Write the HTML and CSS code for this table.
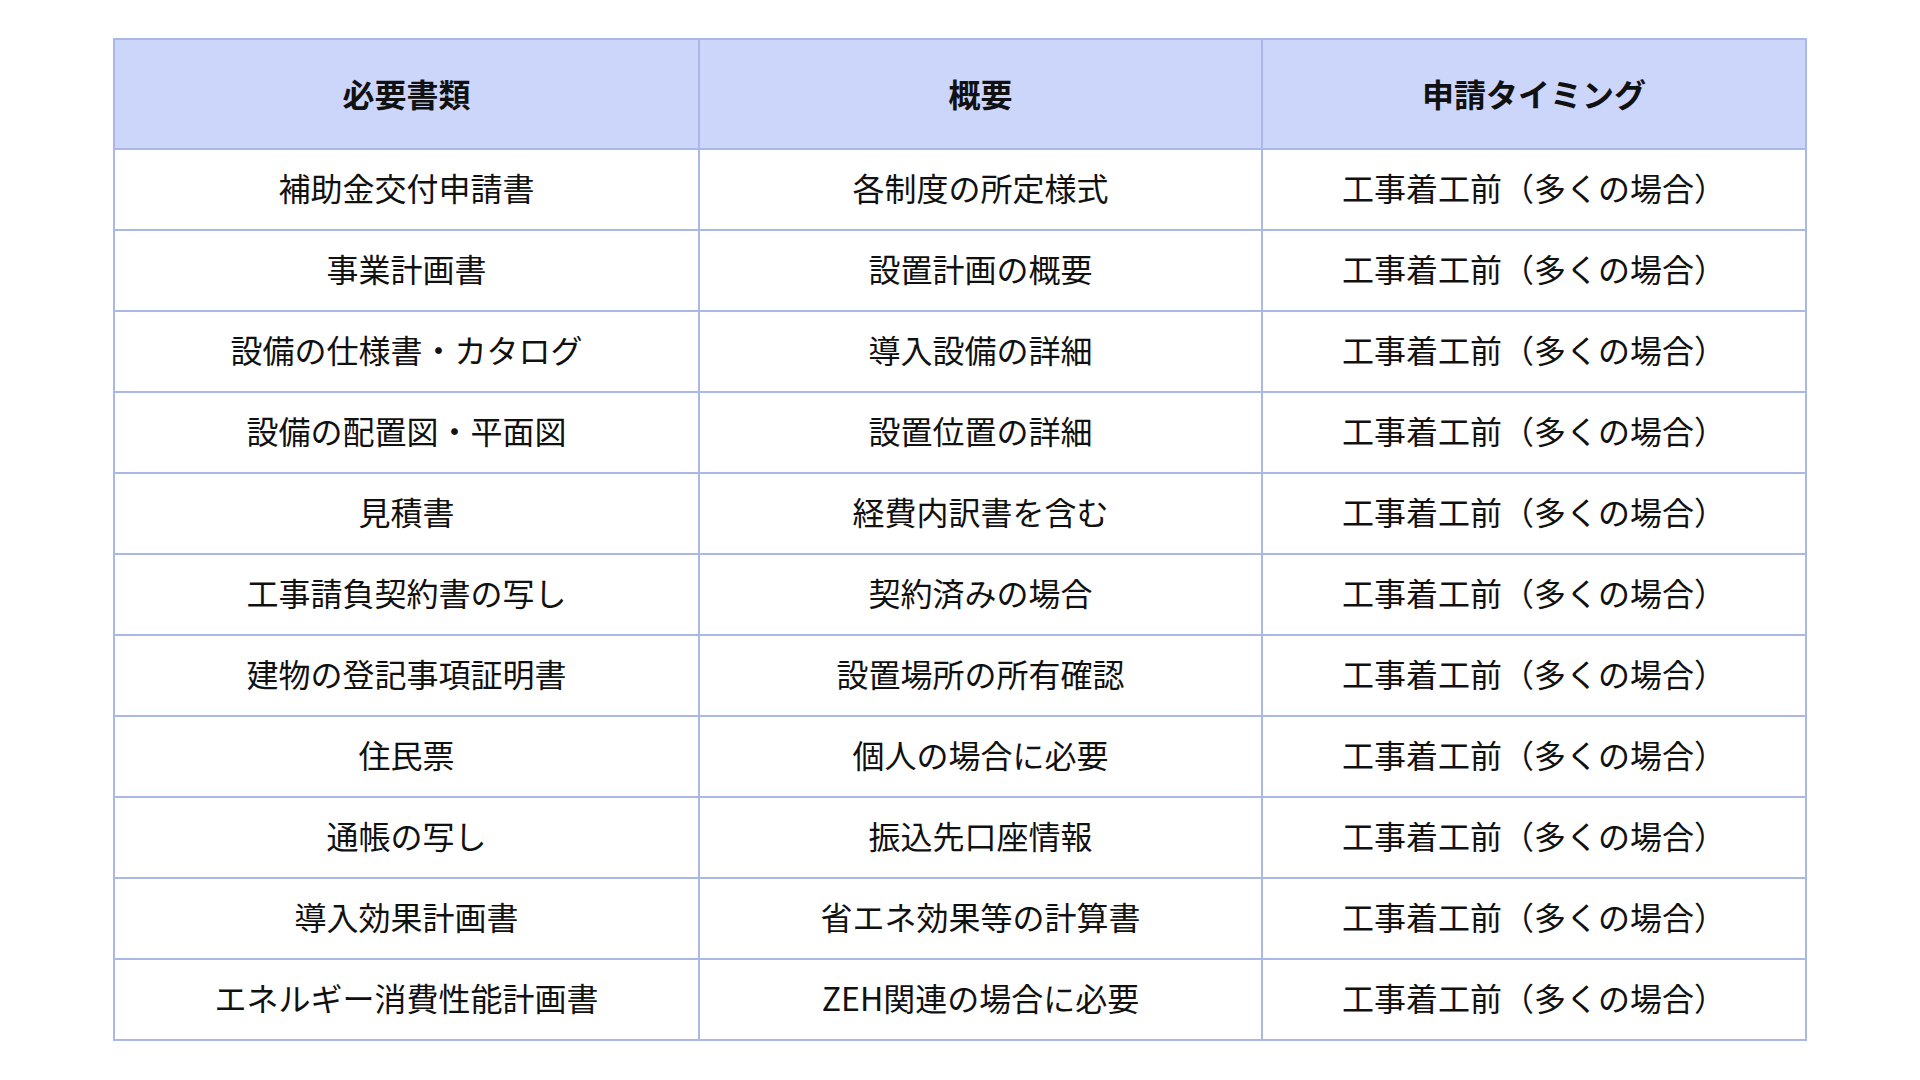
FILE: index.html
```html
<!DOCTYPE html>
<html lang="ja">
<head>
<meta charset="utf-8">
<link rel="stylesheet" href="styles.css">
</head>
<body>
<table class="docs">
  <colgroup>
    <col class="c1"><col class="c2"><col class="c3">
  </colgroup>
  <thead>
    <tr><th>必要書類</th><th>概要</th><th>申請タイミング</th></tr>
  </thead>
  <tbody>
    <tr><td>補助金交付申請書</td><td>各制度の所定様式</td><td>工事着工前（多くの場合）</td></tr>
    <tr><td>事業計画書</td><td>設置計画の概要</td><td>工事着工前（多くの場合）</td></tr>
    <tr><td>設備の仕様書・カタログ</td><td>導入設備の詳細</td><td>工事着工前（多くの場合）</td></tr>
    <tr><td>設備の配置図・平面図</td><td>設置位置の詳細</td><td>工事着工前（多くの場合）</td></tr>
    <tr><td>見積書</td><td>経費内訳書を含む</td><td>工事着工前（多くの場合）</td></tr>
    <tr><td>工事請負契約書の写し</td><td>契約済みの場合</td><td>工事着工前（多くの場合）</td></tr>
    <tr><td>建物の登記事項証明書</td><td>設置場所の所有確認</td><td>工事着工前（多くの場合）</td></tr>
    <tr><td>住民票</td><td>個人の場合に必要</td><td>工事着工前（多くの場合）</td></tr>
    <tr><td>通帳の写し</td><td>振込先口座情報</td><td>工事着工前（多くの場合）</td></tr>
    <tr><td>導入効果計画書</td><td>省エネ効果等の計算書</td><td>工事着工前（多くの場合）</td></tr>
    <tr><td>エネルギー消費性能計画書</td><td>ZEH関連の場合に必要</td><td>工事着工前（多くの場合）</td></tr>
  </tbody>
</table>
</body>
</html>
```

FILE: styles.css
```css
html, body {
  margin: 0;
  padding: 0;
  background: #ffffff;
}

body {
  font-family: "Noto Sans CJK JP", "Noto Sans", sans-serif;
  color: #111111;
}

.docs {
  width: 1692px;
  margin: 38px auto 0;
  border-collapse: collapse;
  table-layout: fixed;
  font-size: 32px;
  line-height: 48px;
}

.c1 { width: 585px; }
.c2 { width: 563px; }
.c3 { width: 544px; }

.docs th,
.docs td {
  border: 2px solid #aab8e8;
  text-align: center;
  vertical-align: middle;
}

.docs th {
  background: #ccd6fb;
  font-weight: 700;
  padding: 29px 10px 31px;
}

.docs td {
  padding: 13px 10px 18px;
  font-weight: 400;
}
```
